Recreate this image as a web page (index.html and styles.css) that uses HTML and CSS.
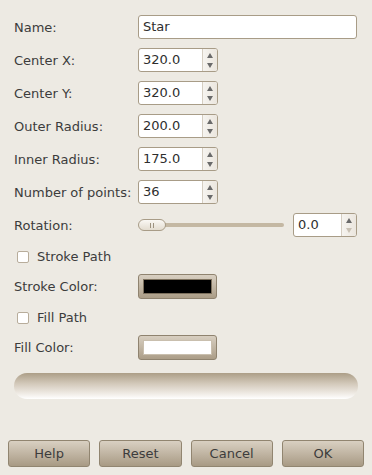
FILE: index.html
```html
<!DOCTYPE html>
<html>
<head>
<meta charset="utf-8">
<link rel="stylesheet" href="styles.css">
</head>
<body>
<div class="dialog">
  <div class="form">
    <div class="label">Name:</div>
    <div class="entry">Star</div>

    <div class="label">Center X:</div>
    <div class="spin"><span class="val">320.0</span><span class="arrows"><span class="up"></span><span class="down"></span></span></div>

    <div class="label">Center Y:</div>
    <div class="spin"><span class="val">320.0</span><span class="arrows"><span class="up"></span><span class="down"></span></span></div>

    <div class="label">Outer Radius:</div>
    <div class="spin"><span class="val">200.0</span><span class="arrows"><span class="up"></span><span class="down"></span></span></div>

    <div class="label">Inner Radius:</div>
    <div class="spin"><span class="val">175.0</span><span class="arrows"><span class="up"></span><span class="down"></span></span></div>

    <div class="label">Number of points:</div>
    <div class="spin"><span class="val">36</span><span class="arrows"><span class="up"></span><span class="down"></span></span></div>

    <div class="label">Rotation:</div>
    <div class="rotation">
      <div class="slider"><span class="thumb"><span class="grip"></span><span class="grip"></span></span><span class="track"></span></div>
      <div class="spin small"><span class="val">0.0</span><span class="arrows"><span class="up"></span><span class="down disabled"></span></span></div>
    </div>
  </div>

  <div class="check-row"><span class="box"></span><span>Stroke Path</span></div>
  <div class="color-row"><span class="label">Stroke Color:</span><span class="colorbtn"><span class="swatch black"></span></span></div>
  <div class="check-row"><span class="box"></span><span>Fill Path</span></div>
  <div class="color-row"><span class="label">Fill Color:</span><span class="colorbtn"><span class="swatch white"></span></span></div>

  <div class="progress"></div>

  <div class="buttons">
    <button class="btn">Help</button>
    <button class="btn">Reset</button>
    <button class="btn">Cancel</button>
    <button class="btn">OK</button>
  </div>
</div>
</body>
</html>
```

FILE: styles.css
```css
html, body {
  margin: 0;
  padding: 0;
  background: #edeae3;
}
body {
  font-family: "DejaVu Sans", sans-serif;
  font-size: 13px;
  color: #3c3c3c;
  width: 372px;
  height: 475px;
  overflow: hidden;
}
.dialog {
  display: flex;
  flex-direction: column;
  height: 475px;
  box-sizing: border-box;
  padding: 15px 0 8px 0;
}
.form {
  display: grid;
  grid-template-columns: 124px 1fr;
  grid-auto-rows: 24px;
  row-gap: 9px;
  padding: 0 15px 0 14px;
  align-items: center;
}
.label {
  white-space: nowrap;
}
.entry {
  height: 24px;
  box-sizing: border-box;
  border: 1px solid #a89c87;
  border-radius: 3px;
  background: #fff;
  padding: 0 4px;
  line-height: 22px;
  color: #2e2e2e;
}
.spin {
  width: 80px;
  height: 24px;
  box-sizing: border-box;
  border: 1px solid #a89c87;
  border-radius: 3px;
  background: #fff;
  display: flex;
  overflow: hidden;
}
.spin .val {
  flex: 1;
  padding-left: 4px;
  line-height: 22px;
  color: #2e2e2e;
}
.arrows {
  width: 14px;
  display: flex;
  flex-direction: column;
  border-left: 1px solid #d5cec2;
  background: linear-gradient(to right, #f6f4f0, #ebe6de);
}
.arrows span {
  flex: 1;
  display: flex;
  align-items: center;
  justify-content: center;
}
.arrows .up::before {
  content: "";
  border-left: 3px solid transparent;
  border-right: 3px solid transparent;
  border-bottom: 5px solid #6a6a6a;
  margin-top: 1px;
}
.arrows .down::before {
  content: "";
  border-left: 3px solid transparent;
  border-right: 3px solid transparent;
  border-top: 5px solid #6a6a6a;
  margin-bottom: 1px;
}
.arrows .down.disabled::before {
  border-top-color: #c9c1b4;
}
.rotation {
  display: flex;
  align-items: center;
  gap: 9px;
}
.slider {
  flex: 1;
  display: flex;
  align-items: center;
  height: 12px;
}
.thumb {
  width: 28px;
  height: 12px;
  box-sizing: border-box;
  border: 1px solid #a89c87;
  border-radius: 6px;
  background: linear-gradient(#faf8f4, #e3dccf);
  display: flex;
  justify-content: center;
  align-items: center;
  gap: 2px;
  position: relative;
  z-index: 1;
}
.grip {
  width: 1px;
  height: 5px;
  background: #9d927f;
}
.track {
  flex: 1;
  height: 4px;
  margin-left: -1px;
  background: #c4b8a3;
  border-radius: 0 2px 2px 0;
}
.spin.small {
  width: 64px;
}
.check-row {
  display: flex;
  align-items: center;
  height: 21px;
  padding-left: 17px;
  gap: 8px;
  margin-top: 9px;
}
.box {
  width: 12px;
  height: 12px;
  box-sizing: border-box;
  border: 1px solid #b8ad9b;
  border-radius: 2px;
  background: #fff;
}
.color-row {
  display: flex;
  align-items: center;
  height: 24px;
  padding-left: 14px;
  margin-top: 7px;
}
.color-row .label {
  width: 124px;
}
.colorbtn {
  width: 79px;
  height: 25px;
  box-sizing: border-box;
  border: 1px solid #8f836f;
  border-radius: 3px;
  background: linear-gradient(#d8cfc1, #ab9d87);
  padding: 4px;
  display: flex;
}
.swatch {
  flex: 1;
  border: 1px solid #7c705d;
}
.swatch.black { background: #000; }
.swatch.white { background: #fff; border-color: #c9bfae; }
.progress {
  margin: 14px 14px 0 14px;
  height: 26px;
  border-radius: 13px;
  background: linear-gradient(#ac9e87 0%, #d2c8b9 40%, #f0ece6 80%, #fff 100%);
}
.buttons {
  margin-top: auto;
  display: flex;
  gap: 9px;
  padding: 0 8px;
}
.btn {
  flex: 1;
  height: 27px;
  box-sizing: border-box;
  border: 1px solid #918570;
  border-radius: 3px;
  background: linear-gradient(#d9d0c2, #a89a84);
  font-family: "DejaVu Sans", sans-serif;
  font-size: 13px;
  color: #3c3c3c;
  padding: 0;
}
```
